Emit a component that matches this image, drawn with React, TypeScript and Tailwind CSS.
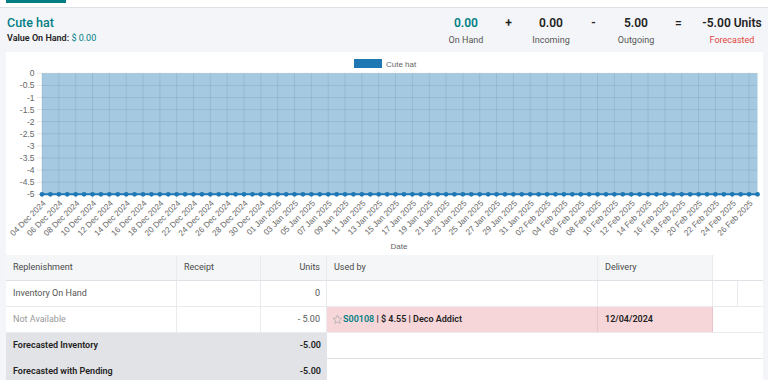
import React from "react";

const MONTHS = ["Jan","Feb","Mar","Apr","May","Jun","Jul","Aug","Sep","Oct","Nov","Dec"];
const N = 86;
const dates = Array.from({ length: N }, (_, i) => {
  const d = new Date(Date.UTC(2024, 11, 4 + i));
  const dd = String(d.getUTCDate()).padStart(2, "0");
  return `${dd} ${MONTHS[d.getUTCMonth()]} ${d.getUTCFullYear()}`;
});

const X0 = 36;
const X1 = 751.5;
const YT = 21.3;
const YB = 142.3;
const xAt = (i: number) => X0 + (i * (X1 - X0)) / (N - 1);
const yAt = (v: number) => YT + ((0 - v) / 5) * (YB - YT);

function Chart() {
  const ticks = Array.from({ length: 11 }, (_, k) => -k * 0.5);
  const grid = "rgba(0,0,0,0.1)";
  return (
    <svg width={757} height={203} style={{ fontFamily: '"Liberation Sans", Arial, sans-serif' }}>
      <rect x={347.5} y={6.5} width={29} height={10} fill="#1f77b4" stroke="#ffffff" strokeWidth={1} />
      <text x={380} y={14.5} fontSize={8} fill="#666">Cute hat</text>
      {dates.map((_, i) =>
        i % 2 === 0 ? (
          <line key={"v" + i} x1={xAt(i)} x2={xAt(i)} y1={YT} y2={YB + 5} stroke={grid} strokeWidth={1} />
        ) : null
      )}
      {ticks.map((t) => (
        <line key={"h" + t} x1={X0 - 5} x2={X1} y1={yAt(t)} y2={yAt(t)} stroke={grid} strokeWidth={1} />
      ))}
      <rect x={X0} y={YT} width={X1 - X0} height={YB - YT} fill="#1f77b4" fillOpacity={0.4} />
      <line x1={X0} x2={X1} y1={YB} y2={YB} stroke="#1f77b4" strokeWidth={2} />
      {dates.map((_, i) => (
        <circle key={"c" + i} cx={xAt(i)} cy={YB} r={2.4} fill="#1f77b4" />
      ))}
      {ticks.map((t) => (
        <text key={"yl" + t} x={28.5} y={yAt(t) + 3} fontSize={8.5} fill="#666" textAnchor="end">
          {t === 0 ? "0" : String(t)}
        </text>
      ))}
      {dates.map((d, i) =>
        i % 2 === 0 ? (
          <text
            key={"xl" + i}
            transform={`translate(${xAt(i) + 2.5}, 150) rotate(-45)`}
            fontSize={8.2}
            fill="#666"
            textAnchor="end"
            dy="0.3em"
          >
            {d}
          </text>
        ) : null
      )}
      <text x={393} y={197} fontSize={8} fill="#666" textAnchor="middle">Date</text>
    </svg>
  );
}

function StarIcon() {
  return (
    <svg width="11" height="11" viewBox="0 0 24 24" fill="none" stroke="#a8a8a8" strokeWidth="1.6" strokeLinejoin="round">
      <polygon points="12,2.5 14.9,8.6 21.5,9.4 16.6,13.9 17.9,20.5 12,17.2 6.1,20.5 7.4,13.9 2.5,9.4 9.1,8.6" />
    </svg>
  );
}

export default function App() {
  const font = { fontFamily: 'Roboto, "Noto Sans", "Liberation Sans", sans-serif' };
  return (
    <div className="w-[768px] h-[380px] overflow-hidden bg-[#f4f5f8] text-[#374151]" style={font}>
      <div className="h-[8px] bg-white border-b border-[#dee2e6]">
        <div className="ml-[6px] w-[60px] h-[3px] bg-[#017e84]" />
      </div>
      <div className="flex justify-between h-[44px]">
        <div className="pl-[7px] pt-[7px]">
          <div className="text-[12.5px] leading-[16px] font-medium text-[#017e84]">Cute hat</div>
          <div className="mt-[1px] text-[9px] leading-[12px] font-semibold text-[#222]">
            Value On Hand: <span className="font-normal text-[#017e84]">$ 0.00</span>
          </div>
        </div>
        <div className="flex items-start pr-[5px] pt-[7px]">
          <div className="w-[60px] flex flex-col items-center">
            <div className="text-[12px] leading-[16px] font-semibold text-[#017e84]">0.00</div>
            <div className="mt-[3px] text-[9px] leading-[12px] text-[#555]">On Hand</div>
          </div>
          <div className="w-[25px] text-center text-[12px] leading-[16px] font-semibold text-[#222]">+</div>
          <div className="w-[60px] flex flex-col items-center">
            <div className="text-[12px] leading-[16px] font-semibold text-[#222]">0.00</div>
            <div className="mt-[3px] text-[9px] leading-[12px] text-[#555]">Incoming</div>
          </div>
          <div className="w-[25px] text-center text-[12px] leading-[16px] font-semibold text-[#222]">-</div>
          <div className="w-[60px] flex flex-col items-center">
            <div className="text-[12px] leading-[16px] font-semibold text-[#222]">5.00</div>
            <div className="mt-[3px] text-[9px] leading-[12px] text-[#555]">Outgoing</div>
          </div>
          <div className="w-[25px] text-center text-[12px] leading-[16px] font-semibold text-[#222]">=</div>
          <div className="ml-[10px] w-[62px] flex flex-col items-center">
            <div className="text-[12px] leading-[16px] font-semibold text-[#222] whitespace-nowrap">-5.00 Units</div>
            <div className="mt-[3px] text-[9px] leading-[12px] text-[#e0463c]">Forecasted</div>
          </div>
        </div>
      </div>
      <div className="ml-[6px] w-[757px] h-[203px] bg-white">
        <Chart />
      </div>
      <div className="ml-[6px] w-[757px] bg-white text-[9px] text-[#4a4a4a]">
        <div className="grid grid-cols-[171px_84px_66px_271px_115px_50px] h-[26px] border-b border-[#dee2e6]">
          <div className="bg-[#f5f6f8] border-r border-[#e9ecef] flex items-center pl-[7px]">Replenishment</div>
          <div className="bg-[#f5f6f8] border-r border-[#e9ecef] flex items-center pl-[7px]">Receipt</div>
          <div className="bg-[#f5f6f8] border-r border-[#e9ecef] flex items-center justify-end pr-[6px]">Units</div>
          <div className="bg-[#f5f6f8] border-r border-[#e9ecef] flex items-center pl-[7px]">Used by</div>
          <div className="bg-[#f5f6f8] border-r border-[#e9ecef] flex items-center pl-[7px]">Delivery</div>
          <div className="bg-white" />
        </div>
        <div className="grid grid-cols-[171px_84px_66px_271px_115px_25px_25px] h-[26px] border-b border-[#e9ecef]">
          <div className="border-r border-[#e9ecef] flex items-center pl-[7px] text-[#555]">Inventory On Hand</div>
          <div className="border-r border-[#e9ecef]" />
          <div className="border-r border-[#e9ecef] flex items-center justify-end pr-[6px] text-[#555]">0</div>
          <div className="border-r border-[#e9ecef]" />
          <div className="border-r border-[#e9ecef]" />
          <div className="border-r border-[#e9ecef]" />
          <div />
        </div>
        <div className="grid grid-cols-[171px_84px_66px_271px_115px_50px] h-[26px] border-b border-[#e9ecef]">
          <div className="border-r border-[#e9ecef] flex items-center pl-[7px] text-[#999]">Not Available</div>
          <div className="border-r border-[#e9ecef]" />
          <div className="border-r border-[#e9ecef] flex items-center justify-end pr-[6px] text-[#555]">- 5.00</div>
          <div className="bg-[#f7d6d9] border-r border-[#eac4c8] flex items-center pl-[5px] font-semibold text-[#222]">
            <StarIcon />
            <span className="text-[#017e84]">S00108</span>
            <span className="whitespace-pre"> | $ 4.55 | Deco Addict</span>
          </div>
          <div className="bg-[#f7d6d9] border-r border-[#eac4c8] flex items-center pl-[7px] font-semibold text-[#222]">12/04/2024</div>
          <div />
        </div>
        <div className="grid grid-cols-[321px_436px] h-[26px]">
          <div className="bg-[#e2e3e7] flex items-center justify-between pl-[7px] pr-[6px] font-semibold text-[#222]">
            <span>Forecasted Inventory</span>
            <span>-5.00</span>
          </div>
          <div className="border-b border-[#dee2e6]" />
        </div>
        <div className="grid grid-cols-[321px_436px] h-[26px]">
          <div className="bg-[#e2e3e7] flex items-center justify-between pl-[7px] pr-[6px] font-semibold text-[#222]">
            <span>Forecasted with Pending</span>
            <span>-5.00</span>
          </div>
          <div className="border-b border-[#dee2e6]" />
        </div>
      </div>
    </div>
  );
}
